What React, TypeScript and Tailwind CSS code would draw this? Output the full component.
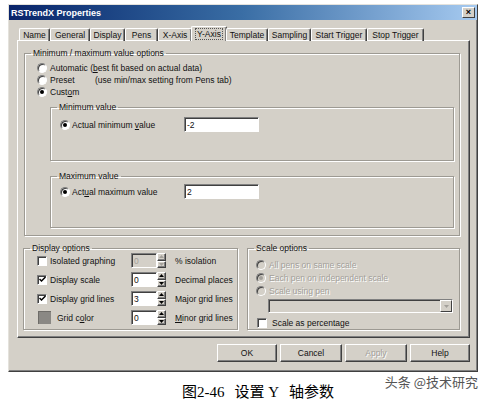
// RSTrendX properties dialog, Y-Axis tab (classic Windows look)
import React from "react";

const ui = "font-['Liberation_Sans',Arial,sans-serif] text-[8.5px] leading-[10px] text-[#111]";
const dis = "text-[#a3a09a] [text-shadow:1px_1px_0_#fff]";

function Radio({ checked, disabled }: { checked?: boolean; disabled?: boolean }) {
  return (
    <span
      className={`flex h-[10px] w-[10px] shrink-0 items-center justify-center rounded-full border border-t-[#808080] border-l-[#808080] border-r-white border-b-white shadow-[inset_1px_1px_0_#404040] ${
        disabled ? "bg-[#d4d0c8]" : "bg-white"
      }`}
    >
      {checked && <span className={`h-[4px] w-[4px] rounded-full ${disabled ? "bg-[#a3a09a]" : "bg-black"}`} />}
    </span>
  );
}

function Check({ checked }: { checked?: boolean }) {
  return (
    <span className="flex h-[10px] w-[10px] shrink-0 items-center justify-center border border-t-[#808080] border-l-[#808080] border-r-white border-b-white bg-white shadow-[inset_1px_1px_0_#404040]">
      {checked && (
        <svg width="7" height="7" viewBox="0 0 7 7">
          <path d="M0.5 3 L2.5 5 L6.5 1" stroke="#000" strokeWidth="1.5" fill="none" />
        </svg>
      )}
    </span>
  );
}

function Edit({ value, w, disabled }: { value: string; w: string; disabled?: boolean }) {
  return (
    <div
      className={`flex h-[15px] items-center border border-t-[#808080] border-l-[#808080] border-r-white border-b-white pl-[2px] shadow-[inset_1px_1px_0_#404040] ${w} ${
        disabled ? "bg-[#d4d0c8] text-[#a3a09a]" : "bg-white"
      }`}
    >
      {value}
    </div>
  );
}

function Arrow({ up, color = "#000" }: { up?: boolean; color?: string }) {
  return (
    <svg width="5" height="3" viewBox="0 0 5 3">
      <path d={up ? "M2.5 0 L5 3 L0 3 Z" : "M0 0 L5 0 L2.5 3 Z"} fill={color} />
    </svg>
  );
}

function Spin({ value, disabled }: { value: string; disabled?: boolean }) {
  const btn =
    "flex h-[7.5px] w-[9px] items-center justify-center bg-[#d4d0c8] border border-t-white border-l-white border-r-[#404040] border-b-[#404040] shadow-[inset_-1px_-1px_0_#808080]";
  const c = disabled ? "#a3a09a" : "#000";
  return (
    <div className="flex shrink-0">
      <Edit value={value} w="w-[26px]" disabled={disabled} />
      <div className="flex h-[15px] flex-col">
        <span className={btn}>
          <Arrow up color={c} />
        </span>
        <span className={btn}>
          <Arrow color={c} />
        </span>
      </div>
    </div>
  );
}

function Group({
  label,
  className,
  children,
}: {
  label: string;
  className: string;
  children?: React.ReactNode;
}) {
  return (
    <fieldset
      className={`box-border border border-[#9d9a93] shadow-[1px_1px_0_#fff,inset_1px_1px_0_#fff] ${className}`}
    >
      <legend className="ml-[6px] px-[2px] leading-[10px]">{label}</legend>
      {children}
    </fieldset>
  );
}

function Btn({ label, w, disabled }: { label: string; w: string; disabled?: boolean }) {
  return (
    <div
      className={`flex h-[18px] items-center justify-center border border-t-white border-l-white border-r-[#404040] border-b-[#404040] bg-[#d4d0c8] shadow-[inset_-1px_-1px_0_#808080] ${w} ${
        disabled ? dis : ""
      }`}
    >
      {label}
    </div>
  );
}

const tabs = [
  ["Name", "w-[31px]"],
  ["General", "w-[40px]"],
  ["Display", "w-[35px]"],
  ["Pens", "w-[33px]"],
  ["X-Axis", "w-[34px]"],
  ["Y-Axis", "w-[36px]"],
  ["Template", "w-[42px]"],
  ["Sampling", "w-[43px]"],
  ["Start Trigger", "w-[56px]"],
  ["Stop Trigger", "w-[57px]"],
];

export default function App() {
  return (
    <div className={`h-[404px] w-[485px] overflow-hidden bg-white ${ui}`}>
      {/* Dialog window */}
      <div className="ml-[8px] mt-[4px] box-border h-[368px] w-[470px] border border-t-[#e4e2dc] border-l-[#e4e2dc] border-r-[#404040] border-b-[#404040] bg-[#d4d0c8] shadow-[inset_-1px_-1px_0_#808080]">
        {/* Title bar */}
        <div className="flex h-[15px] items-center bg-gradient-to-r from-[#0a246a] via-[#3a6ea5] to-[#a6caf0] pl-[2px] pr-[2px]">
          <span className="text-[9px] font-bold text-white">RSTrendX Properties</span>
          <span className="ml-auto flex h-[11px] w-[13px] items-center justify-center border border-t-white border-l-white border-r-[#404040] border-b-[#404040] bg-[#d4d0c8] text-[9px] font-bold leading-none text-black">
            ×
          </span>
        </div>

        {/* Tabs */}
        <div className="relative z-10 -mb-px ml-[10px] mt-[6px] flex h-[15px] items-end">
          {tabs.map(([name, w]) =>
            name === "Y-Axis" ? (
              <div
                key={name}
                className={`-mx-[1px] flex h-[15px] items-start justify-center rounded-t-[2px] border border-b-0 border-t-white border-l-white border-r-[#404040] bg-[#d4d0c8] pt-[2px] shadow-[inset_-1px_0_0_#808080] ${w}`}
              >
                <span className="outline outline-1 outline-dotted outline-[#555] px-[1px]">{name}</span>
              </div>
            ) : (
              <div
                key={name}
                className={`flex h-[13px] items-start justify-center rounded-t-[2px] border border-b-0 border-t-white border-l-white border-r-[#404040] pt-[1px] shadow-[inset_-1px_0_0_#808080] ${w}`}
              >
                {name}
              </div>
            )
          )}
        </div>

        {/* Tab panel */}
        <div className="ml-[8px] box-border h-[298px] w-[453px] border border-t-white border-l-white border-r-[#404040] border-b-[#404040] shadow-[inset_-1px_-1px_0_#808080]">
          <Group label="Minimum / maximum value options" className="ml-[6px] mt-[7px] h-[188px] w-[436px]">
            <div className="flex flex-col pl-[12px] pt-[4px]">
              <div className="flex h-[12px] items-center gap-[3px]">
                <Radio />
                <span>
                  Automatic (<u>b</u>est fit based on actual data)
                </span>
              </div>
              <div className="flex h-[12px] items-center gap-[3px]">
                <Radio />
                <span className="w-[42px]">Preset</span>
                <span>(use min/max setting from Pens tab)</span>
              </div>
              <div className="flex h-[12px] items-center gap-[3px]">
                <Radio checked />
                <span>
                  Cust<u>o</u>m
                </span>
              </div>
            </div>

            <Group label="Minimum value" className="ml-[25px] mt-[4px] h-[59px] w-[404px]">
              <div className="mt-[5px] flex h-[15px] items-center pl-[9px]">
                <Radio checked />
                <span className="ml-[2px] w-[112px]">
                  Actual minimum <u>v</u>alue
                </span>
                <Edit value="-2" w="w-[75px]" />
              </div>
            </Group>

            <Group label="Maximum value" className="ml-[25px] mt-[10px] h-[57px] w-[404px]">
              <div className="mt-[3px] flex h-[15px] items-center pl-[9px]">
                <Radio checked />
                <span className="ml-[2px] w-[112px]">
                  Act<u>u</u>al maximum value
                </span>
                <Edit value="2" w="w-[75px]" />
              </div>
            </Group>
          </Group>

          <div className="ml-[5px] mt-[7px] flex gap-[9px]">
            <Group label="Display options" className="h-[87px] w-[215px]">
              <div className="flex flex-col gap-[4px] pl-[13px]">
                {[
                  ["Isolated graphing", "0", "% isolation", false, true],
                  ["Display scale", "0", "Decimal places", true, false],
                  ["Display grid lines", "3", "Major grid lines", true, false],
                ].map(([l, v, r, c, d]) => (
                  <div key={l as string} className="flex h-[15px] items-center">
                    <div className="flex w-[94px] items-center gap-[3px]">
                      <Check checked={c as boolean} />
                      <span>{l as string}</span>
                    </div>
                    <Spin value={v as string} disabled={d as boolean} />
                    <span className="ml-[9px]">{r as string}</span>
                  </div>
                ))}
                <div className="flex h-[15px] items-center">
                  <div className="flex w-[94px] items-center">
                    <span className="h-[15px] w-[15px] border border-[#d4d0c8] bg-[#8a8884] shadow-[inset_1px_1px_0_#6e6c68]" />
                    <span className="ml-[5px]">
                      Grid c<u>o</u>lor
                    </span>
                  </div>
                  <Spin value="0" />
                  <span className="ml-[9px]">
                    <u>M</u>inor grid lines
                  </span>
                </div>
              </div>
            </Group>

            <Group label="Scale options" className="h-[87px] w-[213px]">
              <div className={`flex flex-col pl-[8px] pt-[5px] ${dis}`}>
                <div className="flex h-[13px] items-center gap-[3px]">
                  <Radio disabled />
                  <span>All pens on same scale</span>
                </div>
                <div className="flex h-[13px] items-center gap-[3px]">
                  <Radio disabled checked />
                  <span>Each pen on independent scale</span>
                </div>
                <div className="flex h-[13px] items-center gap-[3px]">
                  <Radio disabled />
                  <span>Scale using pen</span>
                </div>
              </div>
              <div className="ml-[20px] mt-[2px] box-border flex h-[14px] w-[185px] items-center justify-end border border-t-[#808080] border-l-[#808080] border-r-white border-b-white bg-[#d4d0c8] shadow-[inset_1px_1px_0_#404040]">
                <span className="flex h-[12px] w-[12px] items-center justify-center border border-t-white border-l-white border-r-[#404040] border-b-[#404040] bg-[#d4d0c8]">
                  <Arrow color="#a3a09a" />
                </span>
              </div>
              <div className="ml-[9px] mt-[5px] flex h-[10px] items-center gap-[5px]">
                <Check />
                <span>Scale as percentage</span>
              </div>
            </Group>
          </div>
        </div>

        {/* Buttons */}
        <div className="mr-[7px] mt-[6px] flex justify-end gap-[3px]">
          <Btn label="OK" w="w-[60px]" />
          <Btn label="Cancel" w="w-[62px]" />
          <Btn label="Apply" w="w-[62px]" disabled />
          <Btn label="Help" w="w-[60px]" />
        </div>
      </div>

      {/* Caption and watermark */}
      <div className="flex items-start">
        <div className="ml-[182px] mt-[11px] font-['Liberation_Serif','Noto_Sans_CJK_SC',serif] text-[15px] leading-[18px] text-black">
          图2-46<span className="ml-[10px]">设置 Y</span>
          <span className="ml-[10px]">轴参数</span>
        </div>
        <div className="ml-auto mr-[7px] mt-[1px] font-['Noto_Sans_CJK_SC',sans-serif] text-[13px] leading-[17px] text-[#555]">
          头条 @技术研究
        </div>
      </div>
    </div>
  );
}
